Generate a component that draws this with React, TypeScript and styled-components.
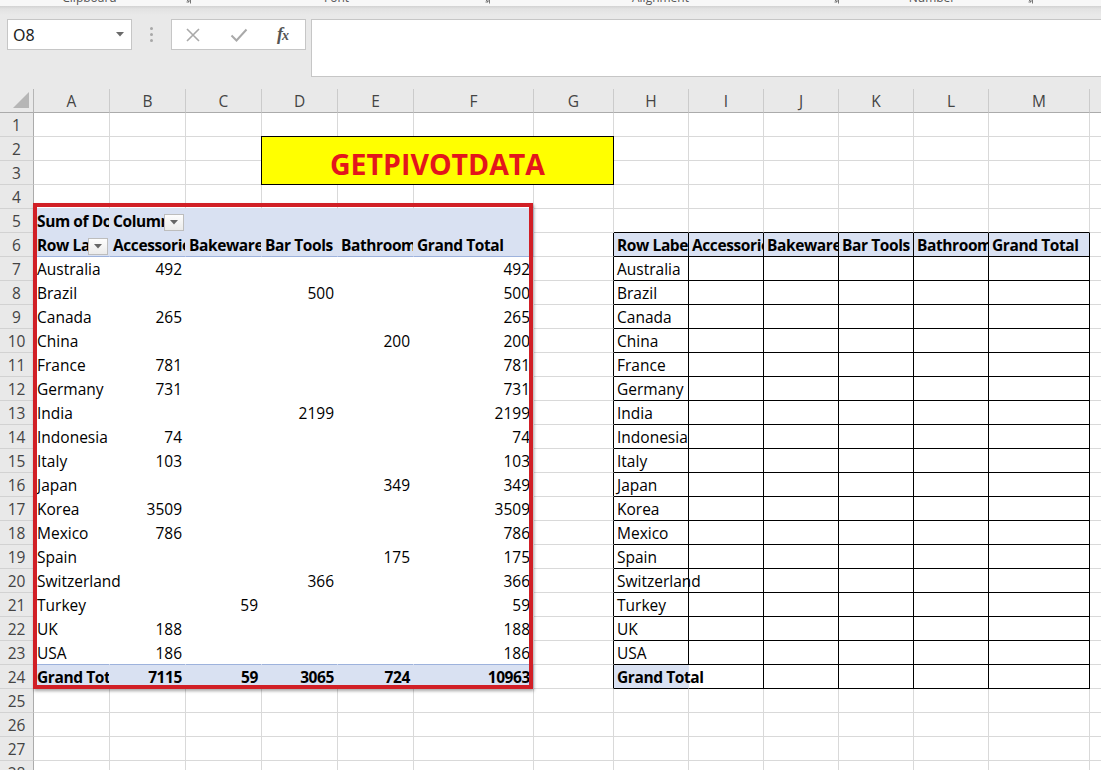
import React from 'react';
import styled, { createGlobalStyle } from 'styled-components';

const GlobalStyle = createGlobalStyle`
  html, body { margin: 0; padding: 0; background: #fff; }
  body { font-family: "Open Sans", "Liberation Sans", sans-serif; }
`;

const BLUE = '#d9e1f2';
const BLUE_LINE = '#9db2dc';
const GRID = '#d9d9d9';
const HEAD_BG = '#e9e9e9';

const COLS = [
  { k: 'A', w: 76 }, { k: 'B', w: 76 }, { k: 'C', w: 76 }, { k: 'D', w: 76 }, { k: 'E', w: 76 },
  { k: 'F', w: 120 }, { k: 'G', w: 80 }, { k: 'H', w: 75 }, { k: 'I', w: 75 }, { k: 'J', w: 75 },
  { k: 'K', w: 75 }, { k: 'L', w: 75 }, { k: 'M', w: 101 }, { k: 'N', w: 101 },
];
const ROWS = 28;

const PIVOT: [string, number, number][] = [
  ['Australia', 1, 492], ['Brazil', 3, 500], ['Canada', 1, 265], ['China', 4, 200],
  ['France', 1, 781], ['Germany', 1, 731], ['India', 3, 2199], ['Indonesia', 1, 74],
  ['Italy', 1, 103], ['Japan', 4, 349], ['Korea', 1, 3509], ['Mexico', 1, 786],
  ['Spain', 4, 175], ['Switzerland', 3, 366], ['Turkey', 2, 59], ['UK', 1, 188], ['USA', 1, 186],
];
const TOTALS = [7115, 59, 3065, 724, 10963];
const HEADS = ['Row Labels', 'Accessories', 'Bakeware', 'Bar Tools', 'Bathroom', 'Grand Total'];

type Spec = {
  text?: string;
  align?: 'left' | 'right' | 'center';
  bold?: boolean;
  bg?: string;
  clip?: boolean;
  right?: string;
  bottom?: string;
  drop?: boolean;
  over?: boolean;
};

function getSpec(row: number, c: number): Spec | null {
  // merged title D2:G3
  if (row >= 2 && row <= 3 && c >= 3 && c <= 6) return null;
  const s: Spec = { right: GRID, bottom: GRID, align: 'left' };

  // pivot table A5:F24
  if (row >= 5 && row <= 24 && c <= 5) {
    s.right = 'transparent';
    s.bottom = row === 6 || row === 23 ? BLUE_LINE : 'transparent';
    if (row === 5 || row === 6 || row === 24) { s.bg = BLUE; s.bold = true; }
    if (row === 5) {
      if (c === 0) { s.text = 'Sum of Dollars'; s.clip = true; }
      if (c === 1) { s.text = 'Column Labels'; s.clip = true; s.drop = true; }
    } else if (row === 6) {
      s.text = HEADS[c];
      s.clip = c < 5;
      if (c === 0) s.drop = true;
    } else if (row === 24) {
      if (c === 0) { s.text = 'Grand Total'; s.clip = true; }
      else { s.text = String(TOTALS[c - 1]); s.align = 'right'; }
    } else {
      const [name, col, val] = PIVOT[row - 7];
      if (c === 0) { s.text = name; s.clip = col === 1; s.over = col !== 1; }
      else if (c === col || c === 5) { s.text = String(val); s.align = 'right'; }
    }
    return s;
  }
  if (row === 4 && c <= 5) s.bottom = BLUE;

  // right-hand table H6:M24
  if (row === 5 && c >= 7 && c <= 12) s.bottom = '#000';
  if (c === 6 && row >= 6 && row <= 24) s.right = '#000';
  if (row >= 6 && row <= 24 && c >= 7 && c <= 12) {
    s.right = '#000';
    s.bottom = '#000';
    if (row === 6) {
      s.bg = BLUE; s.bold = true; s.text = HEADS[c - 7]; s.clip = c < 12;
    } else if (row === 24) {
      if (c === 7) { s.text = 'Grand Total'; s.bold = true; s.bg = BLUE; s.right = 'transparent'; s.over = true; }
    } else if (c === 7) {
      s.text = PIVOT[row - 7][0]; s.over = true;
    }
  }
  return s;
}

/* ---------- chrome ---------- */

const Root = styled.div`
  width: 1101px;
  height: 770px;
  overflow: hidden;
  display: flex;
  flex-direction: column;
  background: ${HEAD_BG};
  font-family: "Open Sans", "Liberation Sans", sans-serif;
`;

const RibbonStrip = styled.div`
  height: 6px;
  flex: none;
  display: flex;
  overflow: hidden;
  background: #f7f7f7;
`;

const RibbonGroup = styled.div<{ $w: number }>`
  width: ${p => p.$w}px;
  flex: none;
  display: flex;
  align-items: flex-start;
  padding-right: 16px;
  box-sizing: border-box;
  position: relative;
`;

const RibbonLabel = styled.span`
  flex: 1;
  text-align: center;
  font-size: 12px;
  line-height: 12px;
  margin-top: -8px;
  color: #555;
`;

const Launcher = styled.svg`
  position: absolute;
  right: 4px;
  top: -4px;
`;

const FormulaBar = styled.div`
  height: 83px;
  flex: none;
  box-sizing: border-box;
  display: flex;
  align-items: flex-start;
  padding: 13px 0 0 7px;
  background: linear-gradient(#d2d2d2 0px, #e2e2e2 3px, ${HEAD_BG} 9px);
`;

const NameBox = styled.div`
  width: 125px;
  height: 31px;
  box-sizing: border-box;
  background: #fff;
  border: 1px solid #c6c6c6;
  display: flex;
  align-items: center;
  justify-content: space-between;
  padding: 0 7px 0 5px;
  font-family: "Noto Sans", "Open Sans", sans-serif;
  font-size: 16px;
  color: #222;
`;

const Dots = styled.div`
  width: 39px;
  height: 31px;
  display: flex;
  flex-direction: column;
  align-items: center;
  justify-content: center;
  gap: 3px;
`;

const Dot = styled.span`
  width: 3px;
  height: 3px;
  border-radius: 50%;
  background: #a8a8a8;
`;

const FxBox = styled.div`
  width: 135px;
  height: 31px;
  box-sizing: border-box;
  background: #fff;
  border: 1px solid #c6c6c6;
  display: flex;
  align-items: center;
  padding-left: 13px;
  gap: 29px;
`;

const FxText = styled.span`
  font-family: "Liberation Serif", "DejaVu Serif", serif;
  font-style: italic;
  font-weight: 700;
  font-size: 18px;
  color: #555;
  letter-spacing: -1px;
  & small { font-size: 14px; }
`;

const FormulaInput = styled.div`
  flex: 1;
  margin-left: 5px;
  height: 58px;
  box-sizing: border-box;
  background: #fff;
  border: 1px solid #c6c6c6;
  border-right: none;
`;

/* ---------- sheet ---------- */

const Sheet = styled.div`
  flex: 1;
  overflow: hidden;
  display: grid;
  grid-template-columns: 34px ${COLS.map(c => c.w + 'px').join(' ')};
  grid-auto-rows: 24px;
  background: #fff;
`;

const Corner = styled.div`
  grid-row: 1;
  grid-column: 1;
  background: ${HEAD_BG};
  border-right: 1px solid #b5b5b5;
  border-bottom: 1px solid #ababab;
  display: flex;
  align-items: flex-end;
  justify-content: flex-end;
  padding: 0 4px 4px 0;
`;

const ColHead = styled.div<{ $col: number }>`
  grid-row: 1;
  grid-column: ${p => p.$col};
  background: ${HEAD_BG};
  border-right: 1px solid #cbcbcb;
  border-bottom: 1px solid #ababab;
  display: flex;
  align-items: center;
  justify-content: center;
  padding-top: 1px;
  font-size: 15.5px;
  color: #444;
`;

const RowHead = styled.div<{ $row: number }>`
  grid-row: ${p => p.$row};
  grid-column: 1;
  background: ${HEAD_BG};
  border-right: 1px solid #ababab;
  border-bottom: 1px solid #d2d2d2;
  display: flex;
  align-items: center;
  justify-content: center;
  padding-top: 1px;
  font-size: 15.5px;
  color: #444;
`;

const Cell = styled.div<{
  $row: number; $col: number; $r: string; $b: string; $bg: string;
  $align: string; $bold: boolean; $clip: boolean; $over: boolean;
}>`
  grid-row: ${p => p.$row};
  grid-column: ${p => p.$col};
  position: relative;
  z-index: ${p => (p.$over ? 1 : 0)};
  border-right: 1px solid ${p => p.$r};
  border-bottom: 1px solid ${p => p.$b};
  background: ${p => p.$bg};
  padding: 1px 3px 0;
  font-size: 15.5px;
  line-height: 23px;
  font-weight: ${p => (p.$bold ? 700 : 400)};
  letter-spacing: ${p => (p.$bold ? '-0.4px' : '0')};
  text-align: ${p => p.$align};
  white-space: nowrap;
  overflow: ${p => (p.$clip ? 'hidden' : 'visible')};
  color: #000;
`;

const DropBtn = styled.span`
  position: absolute;
  right: 1px;
  bottom: 1px;
  width: 20px;
  height: 17px;
  box-sizing: border-box;
  border: 1px solid #bdbdbd;
  background: linear-gradient(#fdfdfd, #ebebeb);
  box-shadow: 3px 0 0 ${BLUE};
  display: flex;
  align-items: center;
  justify-content: center;
  z-index: 1;
`;

const TitleCell = styled.div`
  grid-column: 5 / 9;
  grid-row: 3 / 5;
  margin: -1px 0 0 -1px;
  position: relative;
  z-index: 1;
  border: 1px solid #000;
  background: #ffff00;
  display: flex;
  align-items: flex-end;
  justify-content: center;
  padding-bottom: 6px;
  font-size: 28.5px;
  line-height: 28px;
  font-weight: 700;
  color: #e3161c;
`;

const Highlight = styled.div`
  grid-column: 2 / 8;
  grid-row: 6 / 26;
  margin: -6px 1px 0 -1px;
  position: relative;
  z-index: 3;
  border: 4px solid #d11f26;
  box-shadow: 1px 2px 3px rgba(0, 0, 0, 0.35);
  pointer-events: none;
`;

const GROUPS = [
  { label: 'Clipboard', w: 195 },
  { label: 'Font', w: 299 },
  { label: 'Alignment', w: 349 },
  { label: 'Number', w: 194 },
  { label: 'Styles', w: 200 },
];

export default function App() {
  const cells: React.ReactNode[] = [];
  for (let r = 1; r <= ROWS; r++) {
    cells.push(<RowHead key={'rh' + r} $row={r + 1}>{r}</RowHead>);
    for (let c = 0; c < COLS.length; c++) {
      const s = getSpec(r, c);
      if (!s) continue;
      cells.push(
        <Cell
          key={r + '-' + c}
          $row={r + 1}
          $col={c + 2}
          $r={s.right || GRID}
          $b={s.bottom || GRID}
          $bg={s.bg || 'transparent'}
          $align={s.align || 'left'}
          $bold={!!s.bold}
          $clip={!!s.clip}
          $over={!!s.over}
        >
          {s.text}
          {s.drop && (
            <DropBtn>
              <svg width="8" height="5" viewBox="0 0 8 5"><path d="M0 0h8L4 4.5z" fill="#666" /></svg>
            </DropBtn>
          )}
        </Cell>
      );
    }
  }

  return (
    <Root>
      <GlobalStyle />
      <RibbonStrip>
        {GROUPS.map(g => (
          <RibbonGroup key={g.label} $w={g.w}>
            <RibbonLabel>{g.label}</RibbonLabel>
            <Launcher width="8" height="8" viewBox="0 0 8 8">
              <path d="M0.5 0.5h7v7" fill="none" stroke="#777" />
              <path d="M2 2l4 4M6 3.5V6H3.5" fill="none" stroke="#777" />
            </Launcher>
          </RibbonGroup>
        ))}
      </RibbonStrip>
      <FormulaBar>
        <NameBox>
          <span>O8</span>
          <svg width="8" height="5" viewBox="0 0 8 5"><path d="M0 0h8L4 4.5z" fill="#6a6a6a" /></svg>
        </NameBox>
        <Dots><Dot /><Dot /><Dot /></Dots>
        <FxBox>
          <svg width="16" height="16" viewBox="0 0 16 16">
            <path d="M2 2l12 12M14 2L2 14" stroke="#a9a9a9" strokeWidth="1.6" fill="none" />
          </svg>
          <svg width="18" height="16" viewBox="0 0 18 16">
            <path d="M1.5 8.5l5 5L16.5 2.5" stroke="#a9a9a9" strokeWidth="2" fill="none" />
          </svg>
          <FxText>f<small>x</small></FxText>
        </FxBox>
        <FormulaInput />
      </FormulaBar>
      <Sheet>
        <Corner>
          <svg width="16" height="16" viewBox="0 0 16 16"><path d="M16 0V16H0z" fill="#b6b6b6" /></svg>
        </Corner>
        {COLS.map((c, i) => (
          <ColHead key={c.k} $col={i + 2}>{c.k}</ColHead>
        ))}
        {cells}
        <TitleCell>GETPIVOTDATA</TitleCell>
        <Highlight />
      </Sheet>
    </Root>
  );
}
